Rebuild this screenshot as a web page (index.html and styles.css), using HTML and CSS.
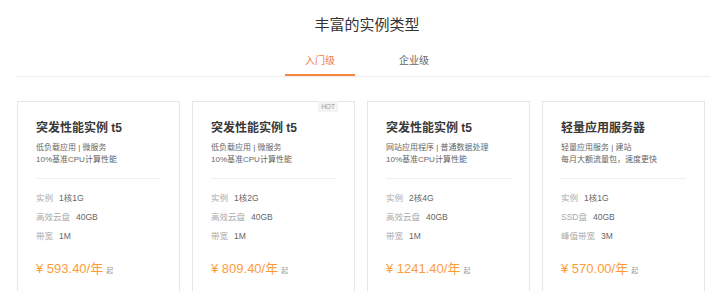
FILE: index.html
```html
<!DOCTYPE html>
<html lang="zh-CN">
<head>
    <meta charset="UTF-8">
    <meta name="viewport" content="width=device-width, initial-scale=1.0">
    <title>丰富的实例类型</title>
    <link rel="stylesheet" href="styles.css">
</head>
<body>
    <div class="wrap">
        <h2 class="title">丰富的实例类型</h2>
        <div class="tabs">
            <div class="tab active">入门级</div>
            <div class="tab">企业级</div>
        </div>
        <div class="cards">
            <div class="card">
                <h3>突发性能实例 t5</h3>
                <p class="desc">低负载应用 | 微服务<br>10%基准CPU计算性能</p>
                <ul class="specs">
                    <li><span class="label">实例</span><span class="val">1核1G</span></li>
                    <li><span class="label">高效云盘</span><span class="val">40GB</span></li>
                    <li><span class="label">带宽</span><span class="val">1M</span></li>
                </ul>
                <div class="price">¥ 593.40/年<small>起</small></div>
                <div class="buy"></div>
            </div>
            <div class="card">
                <span class="hot">HOT</span>
                <h3>突发性能实例 t5</h3>
                <p class="desc">低负载应用 | 微服务<br>10%基准CPU计算性能</p>
                <ul class="specs">
                    <li><span class="label">实例</span><span class="val">1核2G</span></li>
                    <li><span class="label">高效云盘</span><span class="val">40GB</span></li>
                    <li><span class="label">带宽</span><span class="val">1M</span></li>
                </ul>
                <div class="price">¥ 809.40/年<small>起</small></div>
                <div class="buy"></div>
            </div>
            <div class="card">
                <h3>突发性能实例 t5</h3>
                <p class="desc">网站应用程序 | 普通数据处理<br>10%基准CPU计算性能</p>
                <ul class="specs">
                    <li><span class="label">实例</span><span class="val">2核4G</span></li>
                    <li><span class="label">高效云盘</span><span class="val">40GB</span></li>
                    <li><span class="label">带宽</span><span class="val">1M</span></li>
                </ul>
                <div class="price">¥ 1241.40/年<small>起</small></div>
                <div class="buy"></div>
            </div>
            <div class="card">
                <h3>轻量应用服务器</h3>
                <p class="desc">轻量应用服务 | 建站<br>每月大额流量包，速度更快</p>
                <ul class="specs">
                    <li><span class="label">实例</span><span class="val">1核1G</span></li>
                    <li><span class="label">SSD盘</span><span class="val">40GB</span></li>
                    <li><span class="label">峰值带宽</span><span class="val">3M</span></li>
                </ul>
                <div class="price">¥ 570.00/年<small>起</small></div>
                <div class="buy"></div>
            </div>
        </div>
    </div>
</body>
</html>
```

FILE: styles.css
```css
html, body {
    margin: 0;
    padding: 0;
    overflow: hidden;
    background: #fff;
}
body {
    font-family: "Liberation Sans", "Noto Sans CJK SC", sans-serif;
    color: #333;
}
.wrap {
    width: 700px;
    margin-left: 17px;
}
.title {
    margin: 0;
    padding-top: 15px;
    font-size: 15px;
    line-height: 20px;
    font-weight: normal;
    text-align: center;
    color: #333;
}
.tabs {
    display: flex;
    justify-content: center;
    gap: 24px;
    margin-top: 19px;
    border-bottom: 1px solid #eee;
}
.tab {
    width: 70px;
    text-align: center;
    font-size: 10px;
    line-height: 14px;
    padding-bottom: 6px;
    border-bottom: 2px solid transparent;
    color: #666;
}
.tab.active {
    color: #f37b3d;
    border-bottom-color: #f4883f;
}
.cards {
    display: flex;
    gap: 12px;
    margin-top: 24px;
}
.card {
    position: relative;
    flex: 0 0 163px;
    box-sizing: border-box;
    border: 1px solid #e6e6e6;
    padding: 18px 18px 0 18px;
    height: 220px;
}
.card h3 {
    margin: 0;
    font-size: 12px;
    line-height: 17px;
    font-weight: bold;
    color: #383838;
}
.desc {
    margin: 5px 0 0;
    font-size: 8px;
    line-height: 12px;
    color: #666;
    padding-bottom: 12px;
    border-bottom: 1px solid #f0f0f0;
}
.specs {
    list-style: none;
    margin: 10px 0 0;
    padding: 0;
    font-size: 8.5px;
    line-height: 19px;
}
.specs .label {
    color: #aaa;
}
.specs .val {
    margin-left: 6px;
    color: #666;
}
.price {
    margin-top: 14px;
    font-size: 13px;
    line-height: 18px;
    color: #ff9c3a;
}
.price small {
    margin-left: 3px;
    font-size: 7px;
    color: #999;
}
.buy {
    margin-top: 12px;
    height: 28px;
    background: #ff9a4a;
}
.hot {
    position: absolute;
    top: -1px;
    right: 16px;
    width: 20px;
    height: 11px;
    background: #f3f3f3;
    color: #999;
    font-size: 6.5px;
    line-height: 11px;
    text-align: center;
}
```
